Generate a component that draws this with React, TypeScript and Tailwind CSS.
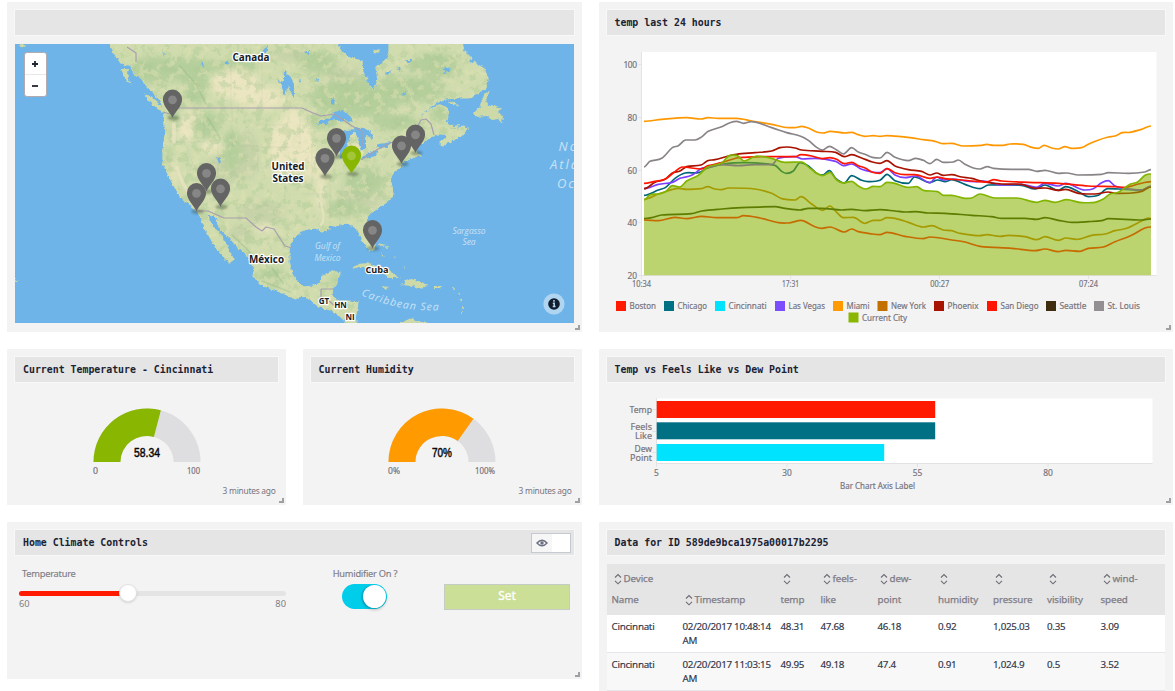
import type { ReactNode } from "react";

type Pt = [number, number];

const parse = (s: string): Pt[] =>
  s.trim().split(/\s+/).map((p) => p.split(",").map(Number) as Pt);

/** Catmull-Rom style smoothing with tangents kept short so the curve does not overshoot. */
function smooth(points: Pt[]): string {
  let d = `M${points[0][0]},${points[0][1]}`;
  for (let i = 0; i < points.length - 1; i++) {
    const p0 = points[Math.max(0, i - 1)];
    const p1 = points[i];
    const p2 = points[i + 1];
    const p3 = points[Math.min(points.length - 1, i + 2)];
    const dx = (p2[0] - p1[0]) / 3;
    const s = (p: Pt, q: Pt) => (q[1] - p[1]) / Math.max(1, q[0] - p[0]);
    const m1 = (p1[1] - p0[1]) * (p2[1] - p1[1]) <= 0 ? 0 : s(p0, p2);
    const m2 = (p2[1] - p1[1]) * (p3[1] - p2[1]) <= 0 ? 0 : s(p1, p3);
    d += `C${(p1[0] + dx).toFixed(1)},${(p1[1] + m1 * dx).toFixed(1)} ${(p2[0] - dx).toFixed(1)},${(p2[1] - m2 * dx).toFixed(1)} ${p2[0]},${p2[1]}`;
  }
  return d;
}

const miami = parse(`147,364 200,358 275,353 318,357 338,353 370,355 425,355 470,363 530,373 580,383 600,383 620,379 640,384 665,396 685,399 705,394 750,399 770,397 790,404 810,409 835,407 855,409 875,407 910,409 945,413 985,419 1020,424 1045,431 1070,430 1105,438 1160,436 1175,433 1195,436 1225,436 1245,432 1285,433 1310,442 1330,445 1347,436 1370,444 1390,447 1410,440 1430,445 1460,443 1480,433 1505,422 1540,411 1560,408 1582,398 1605,397 1640,388 1668,378`);
const stLouis = parse(`147,501 165,484 200,475 232,443 250,437 272,420 300,420 318,412 340,394 380,380 405,368 425,364 445,370 468,365 530,383 575,398 615,408 640,421 665,442 683,450 703,439 725,450 745,462 770,443 790,456 810,463 832,472 855,474 876,457 900,472 940,482 962,475 985,481 1005,491 1025,478 1045,487 1075,486 1090,480 1110,493 1135,504 1155,507 1177,500 1195,505 1250,508 1300,508 1325,514 1350,511 1390,520 1415,519 1450,525 1520,523 1540,518 1600,520 1650,516 1668,509`);
const phoenix = parse(`147,566 180,547 210,538 232,519 255,513 275,500 318,495 338,482 360,479 400,468 425,463 480,458 530,453 555,443 575,441 600,444 620,450 680,454 722,457 748,470 770,464 800,474 832,486 855,490 876,482 900,498 940,509 980,514 1005,525 1025,519 1045,526 1070,524 1100,531 1130,535 1165,545 1220,552 1280,553 1320,565 1350,564 1390,571 1412,568 1450,580 1500,582 1540,576 1560,580 1610,579 1640,574 1668,561`);
const sanDiego = parse(`147,550 180,544 210,538 240,515 262,501 318,507 340,497 380,488 425,474 450,472 500,470 600,470 618,464 650,468 683,476 705,473 725,478 748,491 770,487 790,497 812,505 832,517 855,520 876,506 900,518 930,524 960,524 1005,535 1028,531 1050,536 1100,540 1150,545 1175,546 1197,539 1220,543 1300,547 1390,550 1480,558 1560,560 1590,562 1630,552 1668,545`);
const lasVegas = parse(`147,566 165,562 190,553 232,547 255,535 290,526 320,505 340,502 380,494 430,497 480,494 530,494 550,475 600,470 622,477 660,475 722,484 745,497 770,492 800,508 832,516 855,518 876,506 900,525 930,533 962,528 1005,548 1025,531 1045,540 1075,537 1110,543 1140,545 1165,543 1220,555 1280,553 1325,562 1348,550 1390,558 1412,550 1470,570 1495,566 1520,548 1540,542 1560,558 1590,566 1640,570 1668,558`);
const chicago = parse(`147,586 190,570 212,562 240,535 270,519 310,518 340,503 400,490 450,488 540,496 560,514 575,520 595,513 615,488 640,498 665,520 683,525 703,512 722,535 748,549 770,527 800,541 820,545 855,541 876,523 900,542 940,550 958,531 1005,548 1028,540 1050,545 1070,539 1110,553 1155,566 1180,555 1280,556 1320,567 1350,555 1390,571 1412,560 1450,575 1480,590 1510,586 1538,566 1570,567 1640,570 1668,560`);
const current = parse(`147,600 165,584 190,582 212,575 232,557 255,561 275,543 310,526 338,501 380,489 402,467 425,466 447,483 485,468 530,475 570,487 620,486 645,505 683,527 705,517 725,540 745,549 770,544 790,558 812,567 835,559 855,560 876,547 900,550 940,562 965,560 985,571 1028,575 1045,586 1070,586 1110,595 1130,594 1155,582 1200,594 1265,594 1325,607 1350,601 1380,607 1415,599 1460,608 1500,607 1525,597 1545,582 1570,577 1605,553 1628,546 1650,526 1668,522`);
const boston = parse(`147,598 190,582 230,569 250,565 275,568 318,566 338,560 360,567 380,569 400,564 480,567 530,580 560,596 600,600 618,590 650,612 683,631 705,618 725,637 745,653 775,652 810,670 835,661 855,661 876,653 900,655 940,667 985,681 1010,677 1045,690 1070,692 1090,699 1155,707 1175,704 1215,709 1240,706 1290,710 1325,719 1350,710 1390,721 1412,714 1445,718 1490,706 1530,702 1560,692 1595,685 1640,663 1660,654 1668,656`);
const seattle = parse(`147,656 170,653 200,645 290,641 320,633 380,627 440,623 540,620 570,625 615,630 640,625 680,625 740,630 770,628 810,632 855,629 900,633 930,636 962,635 1000,639 1050,640 1130,646 1190,650 1220,655 1290,655 1325,658 1350,653 1390,661 1430,667 1480,665 1520,662 1540,656 1640,660 1668,657`);
const newYork = parse(`147,660 190,662 240,652 275,656 320,649 365,653 425,653 445,647 495,654 550,668 580,669 618,661 655,678 680,685 705,681 748,696 770,687 790,695 832,702 855,704 876,697 930,709 985,716 1005,711 1070,720 1110,726 1155,739 1250,745 1320,752 1350,747 1390,755 1412,751 1455,754 1480,745 1525,741 1560,725 1605,708 1650,684 1668,681`);

const backLines: [Pt[], string][] = [
  [miami, "#ff9800"],
  [stLouis, "#888487"],
  [chicago, "#006577"],
  [lasVegas, "#7c3fff"],
  [phoenix, "#a81200"],
  [sanDiego, "#ff1500"],
];
const frontLines: [Pt[], string][] = [
  [boston, "#a59a00"],
  [seattle, "#5d7c00"],
  [newYork, "#c66b00"],
];

const legend: [string, string, number, number][] = [
  ["Boston", "#ff1a00", 616, 26.5],
  ["Chicago", "#007184", 664, 29.5],
  ["Cincinnati", "#00e3ff", 715, 38],
  ["Las Vegas", "#7c4dff", 775, 36.5],
  ["Miami", "#ff9b00", 833, 23],
  ["New York", "#c27000", 877.5, 35],
  ["Phoenix", "#a81200", 934, 31],
  ["San Diego", "#ff1500", 987, 38],
  ["Seattle", "#402c0e", 1046, 27],
  ["St. Louis", "#938e92", 1094, 32.5],
];

function Panel({ title, className, children, extra, grip = true }: { title?: string; className: string; children?: ReactNode; extra?: ReactNode; grip?: boolean }) {
  return (
    <section className={`relative flex shrink-0 flex-col bg-[#f3f3f3] px-2 pt-2 ${className}`}>
      <header className="flex h-[25px] shrink-0 items-center justify-between bg-[#e5e5e5] pl-2 pr-[3px] shadow-[0_0_0_1px_#f8f8f8]">
        <h2 className="whitespace-pre font-['DejaVu_Sans_Mono',monospace] text-[9.900px] font-bold leading-[12px] text-[#1a2233]">{title}</h2>
        {extra}
      </header>
      {children}
      {grip && <i className="absolute bottom-[2px] right-[2px] size-[5px] border-b-2 border-r-2 border-[#a0a0a4]" />}
    </section>
  );
}

const mainland = "M108,38 L111,47 118,55 125,63 131,66 134,74 141,79 148,87 155,94 161,101 163,108 165,113 164,124 165,135 163,150 163,163 167,172 173,184 180,196 187,202 194,208 199,213 203,223 207,232 211,239 216,248 225,258 230,263 234,260 230,253 226,245 222,236 214,228 209,220 208,213 214,216 217,219 221,230 230,238 237,246 246,254 250,262 255,268 253,276 262,285 272,289 285,294 295,299 301,296 310,299 318,306 330,310 338,314 345,321 350,328 358,328 355,318 357,310 358,302 350,301 340,301 333,299 332,290 336,285 340,273 332,271 323,276 321,283 313,286 303,287 297,282 292,274 289,262 289,250 292,240 300,232 307,229 316,228 321,231 329,229 326,225 335,226 345,224 352,225 358,230 361,238 366,246 370,251 374,249 374,240 369,230 366,222 368,215 378,208 388,201 393,194 392,187 390,178 394,172 402,166 401,163 412,158 420,155 414,150 417,147 423,143 430,137 438,134 445,134 447,137 440,143 443,146 453,140 461,136 468,128 462,126 455,130 449,128 446,122 449,115 447,108 440,105 428,110 417,122 423,112 434,104 445,99 458,98 470,98 478,93 486,88 488,78 484,69 478,65 470,57 464,51 461,38 389,38 389,55 383,63 376,67 378,80 374,91 370,86 363,76 362,61 350,58 342,52 334,38 Z";

const forest: [number, number, number, number][] = [
  [155, 70, 26, 14], [190, 70, 25, 13], [195, 90, 10, 18], [180, 118, 10, 12], [207, 125, 13, 14],
  [355, 98, 45, 20], [318, 62, 20, 12], [405, 90, 40, 14], [235, 66, 22, 8], [435, 65, 24, 12],
  [320, 122, 16, 7], [395, 122, 22, 9], [246, 262, 5, 14], [232, 150, 10, 20], [365, 180, 20, 14],
  [336, 282, 6, 8], [272, 275, 14, 8], [440, 115, 9, 8], [168, 160, 4, 14], [345, 208, 20, 8],
];
const plains: [number, number, number, number][] = [
  [235, 84, 24, 15], [262, 98, 27, 11], [300, 145, 15, 26], [292, 120, 10, 12], [186, 130, 9, 11],
  [190, 115, 10, 5], [310, 165, 18, 12], [173, 172, 3, 15], [352, 150, 14, 7], [212, 147, 12, 6],
  [283, 150, 14, 30], [320, 190, 4, 22], [265, 228, 9, 4],
];
const hills: [number, number, number, number][] = [
  [345, 77, 22, 10], [300, 55, 30, 7], [248, 155, 10, 24], [262, 212, 22, 12], [225, 170, 22, 14], [240, 233, 12, 8], [360, 196, 22, 14],
];

function Pin({ x, y, color = "#646464" }: { x: number; y: number; color?: string }) {
  return (
    <g transform={`translate(${x} ${y})`}>
      <ellipse cx="1" cy="0" rx="6" ry="2.4" fill="#2b3b28" opacity=".35" filter="url(#soft)" />
      <path d="M0 0C-2-6-9.600-11.500-9.600-18.600a9.600 9.800 0 0 1 19.200 0C9.600-11.500 2-6 0 0Z" fill={color} />
      <circle cy="-18.2" r="4.400" fill="#fff" opacity=".22" />
    </g>
  );
}

function MapView() {
  return (
    <div className="relative mt-[9px] h-[279px] w-[558.500px] overflow-hidden">
      <svg viewBox="15 44 558.5 279" className="block h-full w-full" fontFamily="'Open Sans','Noto Sans',sans-serif">
        <defs>
          <filter id="rough" x="0" y="0" width="100%" height="100%">
            <feTurbulence type="fractalNoise" baseFrequency="0.3" numOctaves="2" seed="4" result="n" />
            <feDisplacementMap in="SourceGraphic" in2="n" scale="4" xChannelSelector="R" yChannelSelector="G" />
          </filter>
          <filter id="blur" x="-40%" y="-40%" width="180%" height="180%"><feGaussianBlur stdDeviation="3" /></filter>
          <filter id="soft" x="-50%" y="-50%" width="200%" height="200%"><feGaussianBlur stdDeviation="1.2" /></filter>
          <filter id="speckGreen" x="0" y="0" width="100%" height="100%" colorInterpolationFilters="sRGB">
            <feTurbulence type="fractalNoise" baseFrequency="0.11" numOctaves="4" seed="11" />
            <feColorMatrix values="0 0 0 0 .68  0 0 0 0 .79  0 0 0 0 .58  8 0 0 0 -4.200" />
          </filter>
          <filter id="speckSand" x="0" y="0" width="100%" height="100%" colorInterpolationFilters="sRGB">
            <feTurbulence type="fractalNoise" baseFrequency="0.13" numOctaves="4" seed="29" />
            <feColorMatrix values="0 0 0 0 .87  0 0 0 0 .88  0 0 0 0 .7  0 8 0 0 -4.400" />
          </filter>
          <clipPath id="land"><path d={mainland} /></clipPath>
        </defs>
        <rect x="15" y="44" width="559" height="279" fill="#6eb4e8" />
        <g filter="url(#rough)">
          <rect x="11" y="40" width="567" height="287" fill="none" />
          <path d={mainland} fill="#d0dcae" stroke="#d3dca8" strokeWidth="1.200" />
          <g clipPath="url(#land)">
            <g filter="url(#blur)">
              {hills.map(([x, y, a, b], i) => <ellipse key={i} cx={x} cy={y} rx={a} ry={b} fill="#c6d2a8" />)}
              {forest.map(([x, y, a, b], i) => <ellipse key={i} cx={x} cy={y} rx={a} ry={b} fill="#b5cf9b" />)}
              {plains.map(([x, y, a, b], i) => <ellipse key={i} cx={x} cy={y} rx={a} ry={b} fill="#ebe6c1" />)}
            </g>
            <rect x="15" y="44" width="559" height="279" filter="url(#speckGreen)" opacity=".42" />
            <rect x="15" y="44" width="559" height="279" filter="url(#speckSand)" opacity=".5" />
          </g>
          <g fill="#cdd9a6">
            <path d="M144,94L150,96 158,103 165,109 168,114 161,112 152,104Z" />
            <path d="M121,69L128,69 127,75 132,85 126,80Z" />
            <path d="M112,46L120,54 128,66 120,63 113,53ZM120,44L128,50 134,58 127,55Z" />
            <path d="M489,90L484,95 480,106 474,113 476,117 487,116 492,120 498,119 502,124 503,116 498,112 501,108 494,105 490,106 486,101Z" />
            <path d="M447,101L455,103 460,106 452,105ZM446,123L453,126 459,125 457,129 450,128Z" />
            <path d="M352,269L358,264 368,263 380,267 391,272 400,278 390,278 384,274 372,269 360,267Z" />
            <path d="M399,285L405,284 404,280 412,279 422,282 428,286 418,288 413,286Z" />
            <path d="M381,286L390,287 386,290ZM434,286L441,286 440,288 434,288Z" />
            <path d="M397,324L405,321 413,317 416,321 429,323 440,327 397,328Z" />
            <path d="M378,243L386,245 382,246ZM381,252L385,258 382,256ZM19,44L27,45 21,48ZM15,279L18,281 15,282Z" />
            <path d="M373,51L380,49 378,54 374,53ZM364,77L370,78 366,80Z" />
            <g><circle cx="405" cy="267" r=".8" /><circle cx="453" cy="288" r=".9" /><circle cx="459" cy="294" r=".9" /><circle cx="461" cy="300" r="1.2" /><circle cx="463" cy="307" r="1" /><circle cx="461" cy="313" r="1" /><circle cx="395" cy="257" r=".8" /><circle cx="387" cy="247" r=".9" /></g>
          </g>
          <g fill="#6eb4e8">
            <path d="M316,124L324,119 331,118 334,112 343,110 350,116 353,122 345,120 338,121 332,120 326,124Z" />
            <path d="M341,158L338,144 342,134 347,130 356,129 352,134 348,142 346,154Z" />
            <path d="M354,127L364,128 372,133 373,139 366,135 366,148 361,151 358,140Z" />
            <path d="M360,160L364,155 378,150 375,156Z" />
            <path d="M376,148L380,144 391,142 388,147Z" />
            <path d="M284,70L289,75 294,84 294,98 290,91 288,85 285,96 281,85 277,80 284,82Z" />
            <path d="M216,157L219,158 222,164 219,163Z" />
            <path d="M261,54L264,49 268,46 266,54ZM200,60L205,65 203,68ZM331,99L335,98 334,105 331,104ZM443,69L449,67 450,71 444,73Z" />
            <path d="M304,52L309,51 308,55ZM225,62L229,60 227,66ZM162,51L166,55 164,57ZM385,73L392,70 387,75ZM402,94L407,90 404,96ZM469,60L477,57 472,64ZM406,60L412,60 410,63ZM397,68L402,66 399,71ZM298,80L301,79 300,83ZM316,79L319,80 317,82Z" />
          </g>
        </g>
        <g fill="none" stroke="#9a9fa0" strokeOpacity=".22" strokeWidth=".6">
          <path d="M164,142H204V118M232,108V146H258V172M258,125H286M258,147H294M218,142V212M261,168H300M285,168V200M312,146V186M300,118V146M185,142L193,164 207,184M302,194H330M330,178V224M340,200V225M350,198V220M303,178L310,190M231,60V108M262,60V108" />
        </g>
        <path d="M324,178Q318,195 322,208T320,226" fill="none" stroke="#e6e3bf" strokeWidth="2.500" opacity=".8" />
        <path d="M174,124V142M177,168Q182,184 190,195" fill="none" stroke="#e9e4c0" strokeWidth="3.500" opacity=".8" strokeLinecap="round" />
        <path d="M232,235L246,248 258,262M272,268L283,283M180,66L196,84 206,104M208,118L220,138M262,281L290,292" fill="none" stroke="#93b981" strokeWidth="1.600" opacity=".38" strokeLinecap="round" strokeDasharray="3 1.500" />
        <g fill="none" stroke="#a79fae" strokeWidth="1.200" strokeLinejoin="round">
          <path d="M163,112L170,114M176,108H302L313,113 321,116 334,114 345,121 352,126 362,131V146M361,160L378,149 390,143 405,139 413,134 421,120 426,119 431,124 434,135M195,211H208L224,218H239L246,218 256,227 262,231 266,227 274,229 281,240 285,246 292,248M127,47L136,53 136,62M321,289H333M321,289L321,297 329,300M329,301L336,307 348,305" />
        </g>
        <g fontSize="10.5" fontWeight="700" fill="#171a22" textAnchor="middle" stroke="#fff" strokeWidth="2.400" paintOrder="stroke" strokeLinejoin="round">
          <text x="251" y="61" textLength="37" lengthAdjust="spacingAndGlyphs">Canada</text>
          <text x="288" y="169.500" textLength="33" lengthAdjust="spacingAndGlyphs">United</text>
          <text x="288" y="182" textLength="31" lengthAdjust="spacingAndGlyphs">States</text>
          <text x="266.500" y="262.500" textLength="35" lengthAdjust="spacingAndGlyphs">México</text>
          <text x="377" y="272.500" fontSize="9.500" textLength="23" lengthAdjust="spacingAndGlyphs">Cuba</text>
          <text x="324" y="304" fontSize="8">GT</text><text x="340.500" y="308" fontSize="8">HN</text><text x="350" y="319.500" fontSize="8">NI</text>
        </g>
        <g fill="#c9e2f6" fontStyle="italic" textAnchor="middle" fontSize="8.500">
          <text x="327.500" y="249" textLength="25">Gulf of</text><text x="327.500" y="260.500" textLength="26">Mexico</text>
          <text x="469" y="233.500" textLength="33">Sargasso</text><text x="469" y="245" textLength="13">Sea</text>
          <path id="carib" d="M361,295Q400,313 446,310" fill="none" />
          <text fontSize="10.500" textAnchor="start"><textPath href="#carib" textLength="80">Caribbean Sea</textPath></text>
          <g fontSize="13" textAnchor="start" letterSpacing="2"><text x="558.500" y="151">North</text><text x="550" y="169">Atlantic</text><text x="557" y="187.500">Ocean</text></g>
        </g>
        <Pin x={172.500} y={118} /><Pin x={206.500} y={191.500} /><Pin x={220.500} y={207} /><Pin x={196.500} y={211.500} />
        <Pin x={336.500} y={156.500} /><Pin x={325} y={176.500} /><Pin x={415.500} y={153} /><Pin x={401.500} y={164} /><Pin x={372.500} y={248.500} />
        <Pin x={351.500} y={174} color="#89b600" />
        <circle cx="554" cy="304" r="10.600" fill="#b0d5f1" />
        <circle cx="554" cy="304" r="5.800" fill="#111c2d" />
        <path d="M554 300.100v1.700M552.800 303.200h1.400v3.400m-1.500 0h2.800" stroke="#b5d8f3" strokeWidth="1.500" fill="none" />
      </svg>
      <div className="absolute left-[9px] top-2 flex h-[45px] w-[23px] flex-col rounded-[3px] border border-[#b4abb0] bg-white">
        <span className="flex flex-1 items-center justify-center border-b border-[#e8e8e8]"><svg viewBox="0 0 8 8" className="mr-px size-2"><path d="M4 1v6M1 4h6" stroke="#222533" strokeWidth="1.800" /></svg></span>
        <span className="flex flex-1 items-center justify-center"><svg viewBox="0 0 8 8" className="mr-px size-2"><path d="M1 4h6" stroke="#222533" strokeWidth="1.800" /></svg></span>
      </div>
    </div>
  );
}

const sans = "'Noto Sans','Open Sans',sans-serif";
const ink = "[&_text]:[stroke:#77737d] [&_text]:[stroke-width:0.18px]";

function LineChart() {
  return (
    <svg viewBox="607 36 558 290" className={`mt-px block h-[290px] w-[558px] shrink-0 ${ink}`} fontFamily={sans} fontSize="8.400" fill="#77737d">
      <rect x="642" y="52" width="514.500" height="223.500" fill="#fff" />
      <path d="M641.500 52V275.500H1156.500" fill="none" stroke="#e3e3e3" />
      <path d="M638.500 64.500h3M638.500 117.500h3M638.500 170.500h3M638.500 222.500h3M638.500 275.500h3M641.500 275v4M790.500 275v4M939.500 275v4M1088.500 275v4" stroke="#e3e3e3" />
      <g transform="translate(595 0) scale(.33333)" fill="none" strokeWidth="5" strokeLinejoin="round">
        {backLines.map(([p, c], i) => <path key={i} d={smooth(p)} stroke={c} />)}
        <path d={`${smooth(current)}L1668,826L147,826Z`} fill="#86b200" fillOpacity=".56" />
        {frontLines.map(([p, c], i) => <path key={i} d={smooth(p)} stroke={c} />)}
        <path d={smooth(current)} stroke="#82b400" />
      </g>
      <g textAnchor="end">
        <text x="637" y="67.500" textLength="13.500">100</text><text x="637" y="120.500">80</text><text x="637" y="173.500">60</text><text x="637" y="225.500">40</text><text x="637" y="278.500">20</text>
      </g>
      <g textAnchor="middle">
        <text x="641.500" y="286.500" textLength="19" lengthAdjust="spacingAndGlyphs">10:34</text><text x="790.500" y="286.500" textLength="17" lengthAdjust="spacingAndGlyphs">17:31</text><text x="939.800" y="286.500" textLength="19" lengthAdjust="spacingAndGlyphs">00:27</text><text x="1088.500" y="286.500" textLength="19" lengthAdjust="spacingAndGlyphs">07:24</text>
      </g>
      {legend.map(([n, c, x, w]) => (
        <g key={n}><rect x={x} y="301" width="10" height="10" fill={c} /><text x={x + 13.500} y="309" textLength={w} lengthAdjust="spacingAndGlyphs">{n}</text></g>
      ))}
      <rect x="848.500" y="312.500" width="10" height="10" fill="#89b600" /><text x="862" y="320.500" textLength="45" lengthAdjust="spacingAndGlyphs">Current City</text>
    </svg>
  );
}

function Gauge({ value, pct, color, min, max }: { value: string; pct: number; color: string; min: string; max: string }) {
  const a = Math.PI * (1 - pct);
  const x = Math.cos(a), y = -Math.sin(a);
  return (
    <>
      <svg viewBox="0 0 120 76" className="ml-[71.500px] mt-[22px] block h-[76px] w-[120px] shrink-0" fontFamily={sans}>
        <path d="M6.500 58a53.500 53.500 0 0 1 107 0H86.600a26.600 26 0 0 0-53.200 0Z" fill="#dedee0" />
        <path d={`M6.500 58A53.500 53.500 0 0 1 ${60 + 53.5 * x} ${58 + 53.5 * y}L${60 + 26.6 * x} ${58 + 26 * y}A26.600 26 0 0 0 33.400 58Z`} fill={color} />
        <text x="60" y="52.500" fontSize="12.500" fontWeight="400" fontFamily="'Liberation Sans',Arial,sans-serif" textAnchor="middle" textLength={value.length > 3 ? 26 : 20} lengthAdjust="spacingAndGlyphs" fill="#050505" stroke="#050505" strokeWidth=".45">{value}</text>
        <g fontSize="8.300" fill="#77737d" className={ink}><text x="6" y="69.500" textLength={min.length > 1 ? 12 : 5} lengthAdjust="spacingAndGlyphs">{min}</text><text x="113" y="69.500" textAnchor="end" textLength={max.length > 3 ? 20 : 13} lengthAdjust="spacingAndGlyphs">{max}</text></g>
      </svg>
      <p className="mt-[5px] whitespace-nowrap pr-[2px] text-right text-[8.400px] leading-[11px] tracking-[-0.250px] text-[#77737d]">3 minutes ago</p>
    </>
  );
}

function BarChart() {
  return (
    <svg viewBox="607 382 558 120" className={`block h-[120px] w-[558px] ${ink}`} fontFamily={sans} fontSize="8.400" fill="#77737d">
      <rect x="656" y="398.500" width="496.500" height="65" fill="#fff" />
      <path d="M656.500 398V463.500H1152.500M652.500 409.500h4M652.500 431.500h4M652.500 452.500h4M656.500 463v4M787 463v4M917.500 463v4M1048 463v4" fill="none" stroke="#e2e2e2" />
      <rect x="656.700" y="401" width="278.500" height="17" fill="#ff1a00" />
      <rect x="656.700" y="422.300" width="278.500" height="17" fill="#007184" />
      <rect x="656.700" y="444" width="227.500" height="17" fill="#00e3ff" />
      <g textAnchor="end">
        <text x="652" y="413" textLength="22.500" lengthAdjust="spacingAndGlyphs">Temp</text>
        <text x="652" y="430" textLength="21.500" lengthAdjust="spacingAndGlyphs">Feels</text><text x="652" y="439" textLength="17" lengthAdjust="spacingAndGlyphs">Like</text>
        <text x="652" y="451.500" textLength="17.500" lengthAdjust="spacingAndGlyphs">Dew</text><text x="652" y="460.500" textLength="22" lengthAdjust="spacingAndGlyphs">Point</text>
      </g>
      <g textAnchor="middle">
        <text x="656.500" y="475.500">5</text><text x="787" y="475.500">30</text><text x="917.500" y="475.500">55</text><text x="1048" y="475.500">80</text>
        <text x="877.500" y="488.500" textLength="75" lengthAdjust="spacingAndGlyphs">Bar Chart Axis Label</text>
      </g>
    </svg>
  );
}

const Sort = () => (
  <svg viewBox="0 0 8 12" className="mr-[2px] inline-block h-3 w-2 align-[-3px]"><path d="M1 4.500 4 1.500l3 3M1 7.800l3 3 3-3" fill="none" stroke="#6e6b76" strokeWidth="1.100" /></svg>
);

const heads: [string, string][] = [["Device", "Name"], ["", "Timestamp"], ["", "temp"], ["feels-", "like"], ["dew-", "point"], ["", "humidity"], ["", "pressure"], ["", "visibility"], ["wind-", "speed"]];
const rows = [
  ["Cincinnati", "02/20/2017 10:48:14 AM", "48.31", "47.68", "46.18", "0.92", "1,025.03", "0.35", "3.09"],
  ["Cincinnati", "02/20/2017 11:03:15 AM", "49.95", "49.18", "47.4", "0.91", "1,024.9", "0.5", "3.52"],
];
const cols = "grid grid-cols-[71px_98px_40px_57px_60.5px_55px_54px_53.5px_1fr]";

function DataTable() {
  return (
    <div className="mt-[9px] h-[127px] overflow-hidden text-[9.800px]">
      <div className={`${cols} h-[51px] bg-[#e5e5e5] pt-1 leading-[21px] tracking-[-0.100px] text-[#807c86] [-webkit-text-stroke:0.250px]`}>
        {heads.map(([a, b], i) => (
          <div key={b} className="whitespace-nowrap pl-[5px]">
            <div className="h-[21px] pl-[2px]">{i !== 1 && <Sort />}{a}</div>
            <div className={i === 1 ? "pl-[2px]" : ""}>{i === 1 && <Sort />}{b}</div>
          </div>
        ))}
      </div>
      {rows.map((r, i) => (
        <div key={i} className={`${cols} h-[38px] border-b border-[#e6e6ea] pt-[5px] leading-[14px] text-[#2f3547] [-webkit-text-stroke:0.150px] ${i ? "bg-[#f8f8f8]" : "bg-white"}`}>
          {r.map((c, j) => <div key={j} className="pl-[5px] tracking-[-0.280px]">{c}</div>)}
        </div>
      ))}
    </div>
  );
}

export default function App() {
  return (
    <main className="flex h-[691px] w-[1175px] gap-[17px] overflow-hidden bg-white pl-[7px] pt-[2px] font-['Noto_Sans','Open_Sans',sans-serif]">
      <div className="flex w-[574.500px] shrink-0 flex-col gap-[17px]">
        <Panel className="h-[330px]"><MapView /></Panel>
        <div className="flex gap-[17px]">
          <Panel title="Current Temperature - Cincinnati" className="h-[156px] w-[278.500px]"><Gauge value="58.34" pct={0.5834} color="#89b600" min="0" max="100" /></Panel>
          <Panel title="Current Humidity" className="h-[156px] w-[279px]"><Gauge value="70%" pct={0.7} color="#ff9b00" min="0%" max="100%" /></Panel>
        </div>
        <Panel
          title="Home Climate Controls"
          className="h-[157px]"
          extra={
            <div className="flex h-5 w-10 border border-[#c5c9d2] bg-white">
              <span className="flex w-5 items-center justify-center bg-[#f6f6f6]">
                <svg viewBox="0 0 12 8" className="h-2 w-3"><path d="M1 4Q6-1.500 11 4 6 9.500 1 4Z" fill="none" stroke="#6b6f82" strokeWidth="1.500" /><circle cx="6" cy="4" r="1.700" fill="#6b6f82" /></svg>
              </span>
            </div>
          }
        >
          <div className="flex pt-[12px] text-[9.300px] leading-[13px] text-[#807c86]">
            <div className="w-[266px] shrink-0 pl-[4px]">
              <div className="pl-[3px] tracking-[-0.250px] [-webkit-text-stroke:0.150px]">Temperature</div>
              <div className="relative mt-[11px] h-[5px] w-[267px] rounded-full bg-[#e4e4e4]">
                <div className="h-full w-[108px] rounded-full bg-[#ff1a00]" />
                <div className="absolute left-[99.500px] top-[-7.500px] size-[18px] rounded-full border border-[#e2e2e2] bg-white shadow-sm" />
              </div>
              <div className="mt-px flex w-[267px] justify-between"><span>60</span><span>80</span></div>
            </div>
            <div className="ml-[39px] w-[90px] shrink-0 text-center">
              <div className="whitespace-nowrap tracking-[-0.250px] [-webkit-text-stroke:0.150px]">Humidifier On ?</div>
              <div className="ml-[22px] mt-[4px] flex h-[25px] w-[45px] justify-end rounded-full bg-[#00cdea] p-[1px]"><div className="size-[23px] rounded-full bg-white shadow-[0_2px_3px_#0003,-2px_0_0_#00b4d4]" /></div>
            </div>
            <button className="ml-[34px] mt-[17px] h-[26px] w-[126px] shrink-0 border border-[#c5ccc5] bg-[#cbdf96] pb-[2px] text-[12px] leading-none text-white [-webkit-text-stroke:0.300px]">Set</button>
          </div>
        </Panel>
      </div>
      <div className="flex w-[574.500px] shrink-0 flex-col gap-[17px]">
        <Panel title="temp last 24 hours" className="h-[330px]"><LineChart /></Panel>
        <Panel title="Temp vs Feels Like vs Dew Point" className="h-[156px]"><BarChart /></Panel>
        <Panel title="Data for ID 589de9bca1975a00017b2295" className="h-[180px]" grip={false}><DataTable /></Panel>
      </div>
    </main>
  );
}
